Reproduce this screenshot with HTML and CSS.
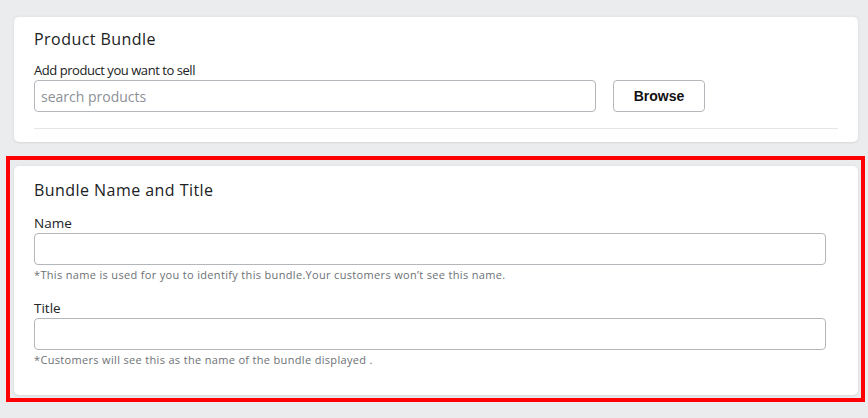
FILE: index.html
```html
<!DOCTYPE html>
<html lang="en">
<head>
<meta charset="utf-8">
<title>Product Bundle</title>
<link rel="stylesheet" href="styles.css">
</head>
<body>
<main class="page">
  <section class="card card-product">
    <h2 class="card-title">Product Bundle</h2>
    <label class="field-label label-product" for="search">Add product you want to sell</label>
    <div class="search-row">
      <input id="search" class="text-input search-input" type="text" placeholder="search products">
      <button class="btn-browse" type="button">Browse</button>
    </div>
    <hr class="divider">
  </section>

  <div class="highlight">
    <section class="card card-bundle">
      <h2 class="card-title">Bundle Name and Title</h2>
      <div class="field field-name">
        <label class="field-label" for="name">Name</label>
        <input id="name" class="text-input" type="text">
        <p class="hint">*This name is used for you to identify this bundle.Your customers won’t see this name.</p>
      </div>
      <div class="field field-title">
        <label class="field-label" for="title">Title</label>
        <input id="title" class="text-input" type="text">
        <p class="hint">*Customers will see this as the name of the bundle displayed .</p>
      </div>
    </section>
  </div>
</main>
</body>
</html>
```

FILE: styles.css
```css
* {
  box-sizing: border-box;
}

html, body {
  margin: 0;
  padding: 0;
}

body {
  background: #ebecee;
  font-family: "Open Sans", "DejaVu Sans", sans-serif;
  color: #202223;
  width: 868px;
  height: 418px;
  overflow: hidden;
}

.page {
  padding: 17px 10px 0 14px;
  display: flex;
  flex-direction: column;
}

.card {
  background: #ffffff;
  border-radius: 5px;
  box-shadow: 0 0 4px rgba(0, 0, 0, 0.06), 0 1px 2px rgba(0, 0, 0, 0.05);
  display: flex;
  flex-direction: column;
}

.card-product {
  height: 125px;
  padding: 12px 20px 0 20px;
}

.card-title {
  margin: 0;
  font-size: 16px;
  font-weight: 500;
  line-height: 20px;
  letter-spacing: 0.45px;
  color: #202223;
}

.field-label {
  display: block;
  font-size: 13.5px;
  line-height: 18px;
  color: #202223;
}

.label-product {
  margin-top: 12px;
  font-size: 13px;
  letter-spacing: -0.45px;
}

.search-row {
  display: flex;
  align-items: center;
  gap: 17px;
  margin-top: 1px;
}

.text-input {
  display: block;
  height: 32px;
  border: 1px solid #b3b6ba;
  border-radius: 4px;
  background: #fff;
  padding: 0 6px;
  font-family: inherit;
  font-size: 14px;
  color: #202223;
  outline: none;
}

.text-input::placeholder {
  color: #8c9196;
}

.search-input {
  width: 562px;
}

.btn-browse {
  width: 92px;
  height: 32px;
  border: 1px solid #b3b6ba;
  border-radius: 4px;
  background: #fff;
  font-family: "Liberation Sans", Arial, sans-serif;
  font-weight: 700;
  font-size: 14px;
  color: #111;
  padding: 0;
}

.divider {
  border: 0;
  border-top: 1px solid #e4e5e7;
  margin: 16px 0 0 0;
}

.highlight {
  margin: 14px -7px 0 -8px;
  border: 4px solid #ff0000;
  padding: 6px 3px 3px 4px;
}

.card-bundle {
  height: 229px;
  padding: 14px 32px 0 20px;
}

.card-bundle .card-title {
  margin-bottom: 14px;
}

.field {
  display: flex;
  flex-direction: column;
}

.field-title {
  margin-top: 16px;
}

.field .field-label {
  margin-bottom: 1px;
}

.hint {
  margin: 2px 0 0 0;
  font-size: 11px;
  line-height: 16px;
  letter-spacing: 0.33px;
  color: #6d7175;
}
```
